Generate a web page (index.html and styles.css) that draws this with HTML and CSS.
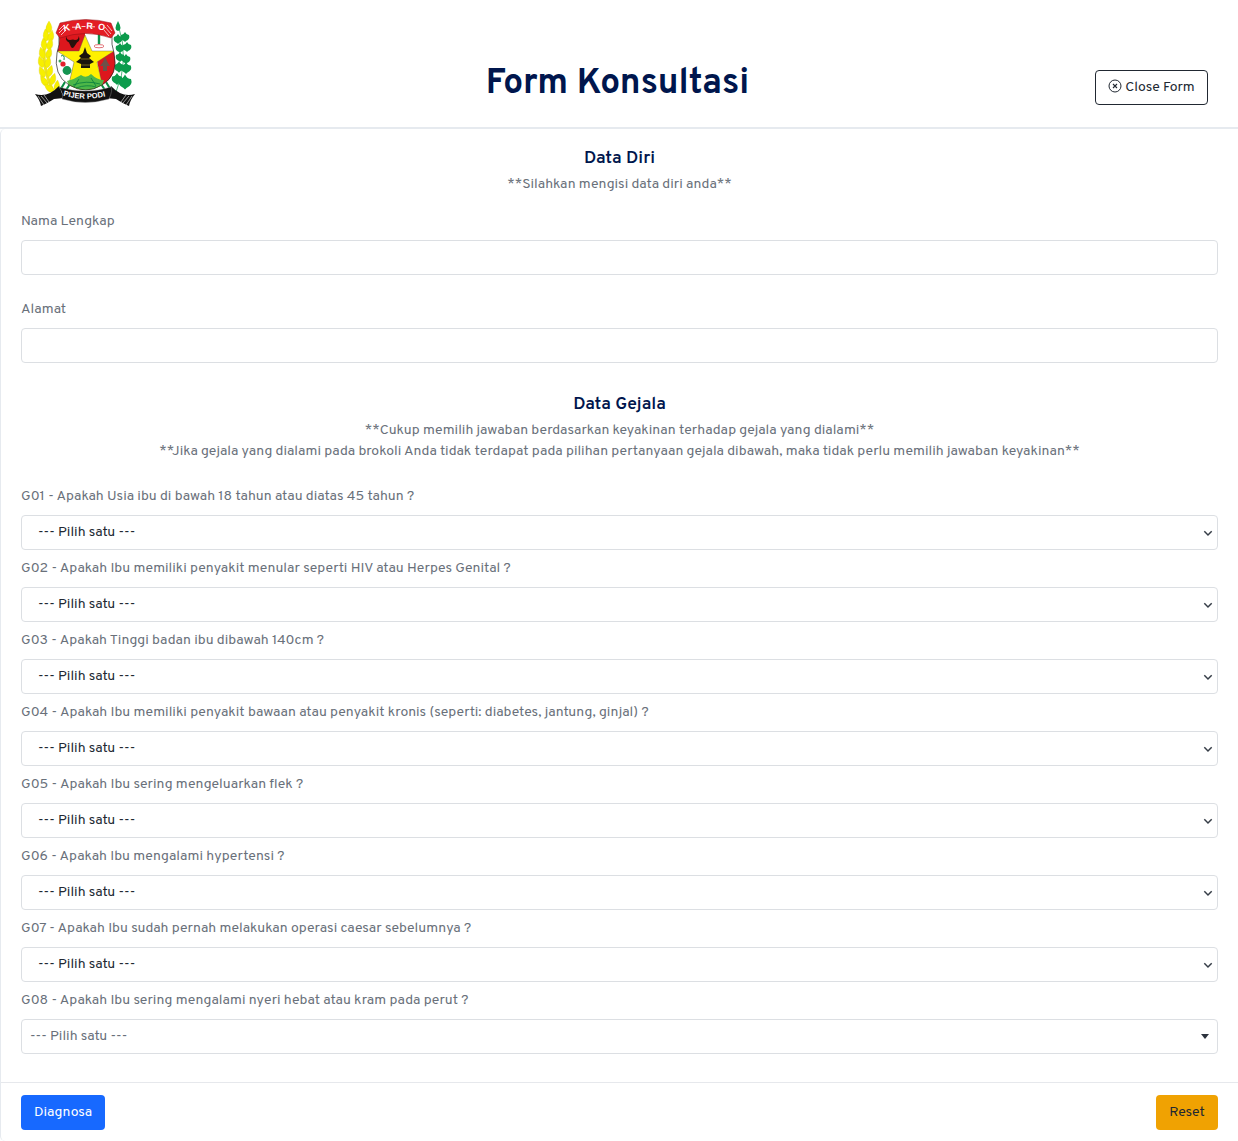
FILE: index.html
```html
<!DOCTYPE html>
<html lang="id">
<head>
<meta charset="utf-8">
<title>Form Konsultasi</title>
<link rel="stylesheet" href="styles.css">
</head>
<body>
<header class="page-header">
  <svg class="logo" viewBox="0 0 110 100" width="110" height="100" role="img" aria-label="Karo">
    <defs>
      <clipPath id="shield"><path d="M29 24 Q56 15 82 24 Q81 32 84 41 Q89 63 72 73 Q56 83 39 73 Q23 63 27 41 Q30 33 29 24Z"/></clipPath>
      <path id="ribbonText" d="M33 83.5 Q55 90 79 83.5"/>
      <path id="topText" d="M34 19.2 Q56 14.6 79 19.2"/>
      <path id="grain" d="M0 -6Q5 1 1.5 5Q0 6.5 -1.5 5Q-5 1 0 -6Z"/>
      <path id="leaf" d="M0 -5 Q1.5 -2 4 -2 Q5.5 2 1 4 L0 5 L-1 4 Q-5.5 2 -4 -2 Q-1.5 -2 0 -5Z"/>
    </defs>
    <g fill="#f7ef00" stroke="#d9cb20" stroke-width=".3">
      <path d="M18 14 Q8 48 23 79" fill="none" stroke="#eee51a" stroke-width="3"/>
      <use href="#grain" x="19" y="15"/>
      <use href="#grain" transform="translate(16 23) rotate(-8)"/><use href="#grain" transform="translate(21 24) rotate(12)"/>
      <use href="#grain" transform="translate(14 32) rotate(-8)"/><use href="#grain" transform="translate(20 32) rotate(15)"/>
      <use href="#grain" transform="translate(12 41) rotate(-14)"/><use href="#grain" transform="translate(19 41) rotate(15)"/>
      <use href="#grain" transform="translate(11 50) rotate(-18)"/><use href="#grain" transform="translate(18 50) rotate(12)"/>
      <use href="#grain" transform="translate(12 60) rotate(-24)"/><use href="#grain" transform="translate(20 59) rotate(18)"/>
      <use href="#grain" transform="translate(14 69) rotate(-35)"/><use href="#grain" transform="translate(23 67) rotate(18)"/>
      <use href="#grain" transform="translate(19 76) rotate(-50)"/><use href="#grain" transform="translate(27 74) rotate(5)"/>
    </g>
    <g fill="#0b9b4b">
      <path d="M88 12 Q100 48 86 80" fill="none" stroke="#0b9b4b" stroke-width=".7"/>
      <path d="M88 9 Q93 18 88 19 Q83 18 88 9Z"/>
      <use href="#leaf" x="88" y="27"/><use href="#leaf" x="95" y="25"/>
      <use href="#leaf" x="90" y="36"/><use href="#leaf" x="97" y="35"/>
      <use href="#leaf" x="90" y="45"/><use href="#leaf" x="96" y="47"/>
      <use href="#leaf" transform="translate(89 55) scale(1.15)"/><use href="#leaf" transform="translate(96 56) scale(1.2)"/>
      <use href="#leaf" transform="translate(87 67) scale(1.2)"/><use href="#leaf" transform="translate(95 70) scale(1.5)"/>
    </g>
    <path d="M38 65 L29 80 M73 65 L82 80 M42 69 L34 81 M69 69 L77 81" stroke="#078c43" stroke-width="2.1"/>
    <g clip-path="url(#shield)">
      <path fill="#fff" d="M20 10h70v75H20z"/>
      <path fill="#dd171d" d="M26 18h29v25L45 46L26 39z M84 39L67 48L72 76L90 60z"/>
      <path fill="#fff" d="M26 40L45 48L39 75L20 62z"/>
      <path d="M28 39L45 46M39 74L45 50" stroke="#222" stroke-width=".6"/>
      <path fill="#fff000" stroke="#555" stroke-width=".4" d="M55 23L62 39H84L67 50L73 76Q55 85 38 76L44 50L27 39H49Z"/>
      <path fill="#4eb748" d="M37 69Q45 67 51 63Q56 67 61 62Q67 68 74 68L71 76Q56 83 40 76Z"/>
      <path d="M43 73Q56 68 70 72M46 76Q57 72 66 75M49 67L44 75M61 66L66 74" fill="none" stroke="#087e3f" stroke-width=".8"/>
    </g>
    <path d="M29 24 Q30 33 27 41 Q23 63 39 73 Q56 83 72 73 Q89 63 84 41 Q81 32 82 24" fill="none" stroke="#222" stroke-width=".7"/>
    <path d="M55 35L57 41L61 44L59 46L64 50L60 52L60 56H51V52L46 50L51 46L49 44L53 41Z" fill="#19140c"/>
    <path d="M51 47H60M51 53H60" stroke="#b79b24" stroke-width=".6"/>
    <path d="M36.5 24Q36 28 40 28L43 27.5L45 28Q49 28 48.5 24Q51 28 47 30.5L44 35Q42.5 37 41 35L39 30.5Q34.5 28 36.5 24Z" fill="#29110c"/>
    <path d="M69 22V32" stroke="#10934a" stroke-width="2.4"/><ellipse cx="69" cy="34.2" rx="5" ry="1.6" fill="none" stroke="#d84b52" stroke-width=".8"/>
    <path d="M75 45L78 51L80 54L77 54V59H73V54H70L73 50Z" fill="#6d5149"/>
    <path d="M31 44Q35 42 34 48" fill="none" stroke="#15904a"/><circle cx="33" cy="52" r="2.6" fill="#e3212d"/><circle cx="30" cy="49" r="1.5" fill="#35a657"/>
    <circle cx="37" cy="58.5" r="4.4" fill="#159451"/>
    <path d="M30 11 Q56 4 81 11 L85 21 L81 26 Q56 17 30 26 L26 21Z" fill="#e31d24" stroke="#8c1114" stroke-width=".5"/>
    <path d="M29 18L34 13M29 21L35 15M31 23L36 18M77 13L82 19M75 15L81 22M74 18L79 24" stroke="#fff" stroke-width=".7"/>
    <path d="M42 15.2H46M51.5 14.5H55.5M61 14.8H65" stroke="#fff" stroke-width=".8"/>
    <text class="logo-name" textLength="42"><textPath href="#topText">K A R O</textPath></text>
    <path d="M5 82Q18 86 29 74L34 86L24 87Q16 92 11 94Q10 88 5 82Z M105 82Q92 86 81 74L76 86L86 87Q94 92 99 94Q100 88 105 82Z" fill="#111"/>
    <path d="M8 84L14 93M11 84L17 91M14 83L19 90M102 84L96 93M99 84L93 91M96 83L91 90" stroke="#bbb" stroke-width=".8"/>
    <path d="M29 75Q55 83 81 75Q83 78 79 87Q55 94 32 87Q34 82 29 75Z" fill="#111" stroke="#999" stroke-width=".4"/>
    <text class="logo-motto"><textPath href="#ribbonText" textLength="43">PIJER PODI</textPath></text>
  </svg>
  <h1 class="title">Form Konsultasi</h1>
  <button class="btn btn-outline" type="button">
    <svg class="close-icon" viewBox="0 0 14 14" width="14" height="14" fill="none" stroke="currentColor"><circle cx="7" cy="7" r="6" stroke-width="1"/><path d="M5 5L9 9M9 5L5 9" stroke-width="1.1"/></svg>
    <span>Close Form</span>
  </button>
</header>
<form class="card">
  <div class="card-body">
    <h2 class="section-title">Data Diri</h2>
    <p class="hint hint-identity">**Silahkan mengisi data diri anda**</p>
    <div class="field"><label for="nama">Nama Lengkap</label><input class="control" id="nama" type="text"></div>
    <div class="field"><label for="alamat">Alamat</label><input class="control" id="alamat" type="text"></div>
    <h2 class="section-title symptoms-title">Data Gejala</h2>
    <p class="hint">**Cukup memilih jawaban berdasarkan keyakinan terhadap gejala yang dialami**</p>
    <p class="hint">**Jika gejala yang dialami pada brokoli Anda tidak terdapat pada pilihan pertanyaan gejala dibawah, maka tidak perlu memilih jawaban keyakinan**</p>
    <div class="questions">
      <div class="question"><label>G01 - Apakah Usia ibu di bawah 18 tahun atau diatas 45 tahun ?</label><div class="control select"><span>--- Pilih satu ---</span><svg viewBox="0 0 10 7"><path d="M1.3 1.3L5 5L8.7 1.3"/></svg></div></div>
      <div class="question"><label>G02 - Apakah Ibu memiliki penyakit menular seperti HIV atau Herpes Genital ?</label><div class="control select"><span>--- Pilih satu ---</span><svg viewBox="0 0 10 7"><path d="M1.3 1.3L5 5L8.7 1.3"/></svg></div></div>
      <div class="question"><label>G03 - Apakah Tinggi badan ibu dibawah 140cm ?</label><div class="control select"><span>--- Pilih satu ---</span><svg viewBox="0 0 10 7"><path d="M1.3 1.3L5 5L8.7 1.3"/></svg></div></div>
      <div class="question"><label>G04 - Apakah Ibu memiliki penyakit bawaan atau penyakit kronis (seperti: diabetes, jantung, ginjal) ?</label><div class="control select"><span>--- Pilih satu ---</span><svg viewBox="0 0 10 7"><path d="M1.3 1.3L5 5L8.7 1.3"/></svg></div></div>
      <div class="question"><label>G05 - Apakah Ibu sering mengeluarkan flek ?</label><div class="control select"><span>--- Pilih satu ---</span><svg viewBox="0 0 10 7"><path d="M1.3 1.3L5 5L8.7 1.3"/></svg></div></div>
      <div class="question"><label>G06 - Apakah Ibu mengalami hypertensi ?</label><div class="control select"><span>--- Pilih satu ---</span><svg viewBox="0 0 10 7"><path d="M1.3 1.3L5 5L8.7 1.3"/></svg></div></div>
      <div class="question"><label>G07 - Apakah Ibu sudah pernah melakukan operasi caesar sebelumnya ?</label><div class="control select"><span>--- Pilih satu ---</span><svg viewBox="0 0 10 7"><path d="M1.3 1.3L5 5L8.7 1.3"/></svg></div></div>
      <div class="question"><label>G08 - Apakah Ibu sering mengalami nyeri hebat atau kram pada perut ?</label><div class="control select search-select"><span>--- Pilih satu ---</span><i class="caret"></i></div></div>
    </div>
  </div>
  <footer class="card-footer">
    <button class="btn btn-primary" type="button"><span>Diagnosa</span></button>
    <button class="btn btn-warning" type="button"><span>Reset</span></button>
  </footer>
</form>
</body>
</html>
```
FILE: styles.css
```css
* { box-sizing: border-box; }
body { margin: 0; background: #fff; color: #69707a; font: 14px/21px Overpass, Roboto, sans-serif; }
h1, h2, p { margin: 0; }
.page-header { height: 129px; padding: 12px 30px 0; display: grid; grid-template-columns: 110px 1fr 113px; border-bottom: 2px solid #e6eaef; align-items: start; }
.logo { display: block; }
.title { margin-top: 50px; text-align: center; font-size: 35.2px; line-height: 44px; font-weight: 700; color: #00164d; }
.logo-name { font: bold 9px "Liberation Sans", sans-serif; fill: #fff; letter-spacing: 1px; }
.logo-motto { font: bold 7.6px "Liberation Sans", sans-serif; fill: #fff; }
.btn { height: 35px; padding: 0 12px; border: 1px solid transparent; border-radius: 4px; font: inherit; white-space: nowrap; display: flex; align-items: center; justify-content: center; }
.btn span { padding-bottom: 1px; }
.btn-outline { width: 113px; margin-top: 58px; gap: 3px; border-color: #212832; background: #fff; color: #212832; }
.close-icon { flex: none; margin-bottom: 3px; }
.card { height: 1012px; border-left: 1px solid #e6eaef; border-radius: 5px; display: flex; flex-direction: column; }
.card-body { height: 953px; padding: 19px 20px 0; }
.section-title { text-align: center; color: #00164d; font-size: 17.6px; font-weight: 600; line-height: 22px; margin-bottom: 4px; }
.hint { text-align: center; white-space: nowrap; }
.hint-identity { margin-bottom: 16px; }
.field { margin-bottom: 24px; }
label { display: block; line-height: 21px; margin-bottom: 8px; white-space: nowrap; }
.control { display: block; width: 100%; height: 35px; border: 1px solid #dcdfe3; border-radius: 4px; background: #fff; }
.symptoms-title { margin-top: 31px; }
.questions { display: grid; gap: 8px; margin-top: 24px; }
.select { display: flex; align-items: center; justify-content: space-between; padding: 0 4px 0 16px; color: #212832; }
.select svg { width: 10px; height: 7px; margin-top: 2px; fill: none; stroke: #363d47; stroke-width: 1.5; }
.search-select { padding: 0 8px; color: #69707a; }
.caret { border: 4px solid transparent; border-top: 5px solid #2c333d; border-bottom: 0; }
.card-footer { height: 59px; border-top: 1px solid #e6e8ec; padding: 12px 20px 0; display: flex; justify-content: space-between; }
.btn-primary { width: 84px; color: #fff; background: #1769ff; }
.btn-warning { width: 62px; color: #212832; background: #f0a202; }
```
